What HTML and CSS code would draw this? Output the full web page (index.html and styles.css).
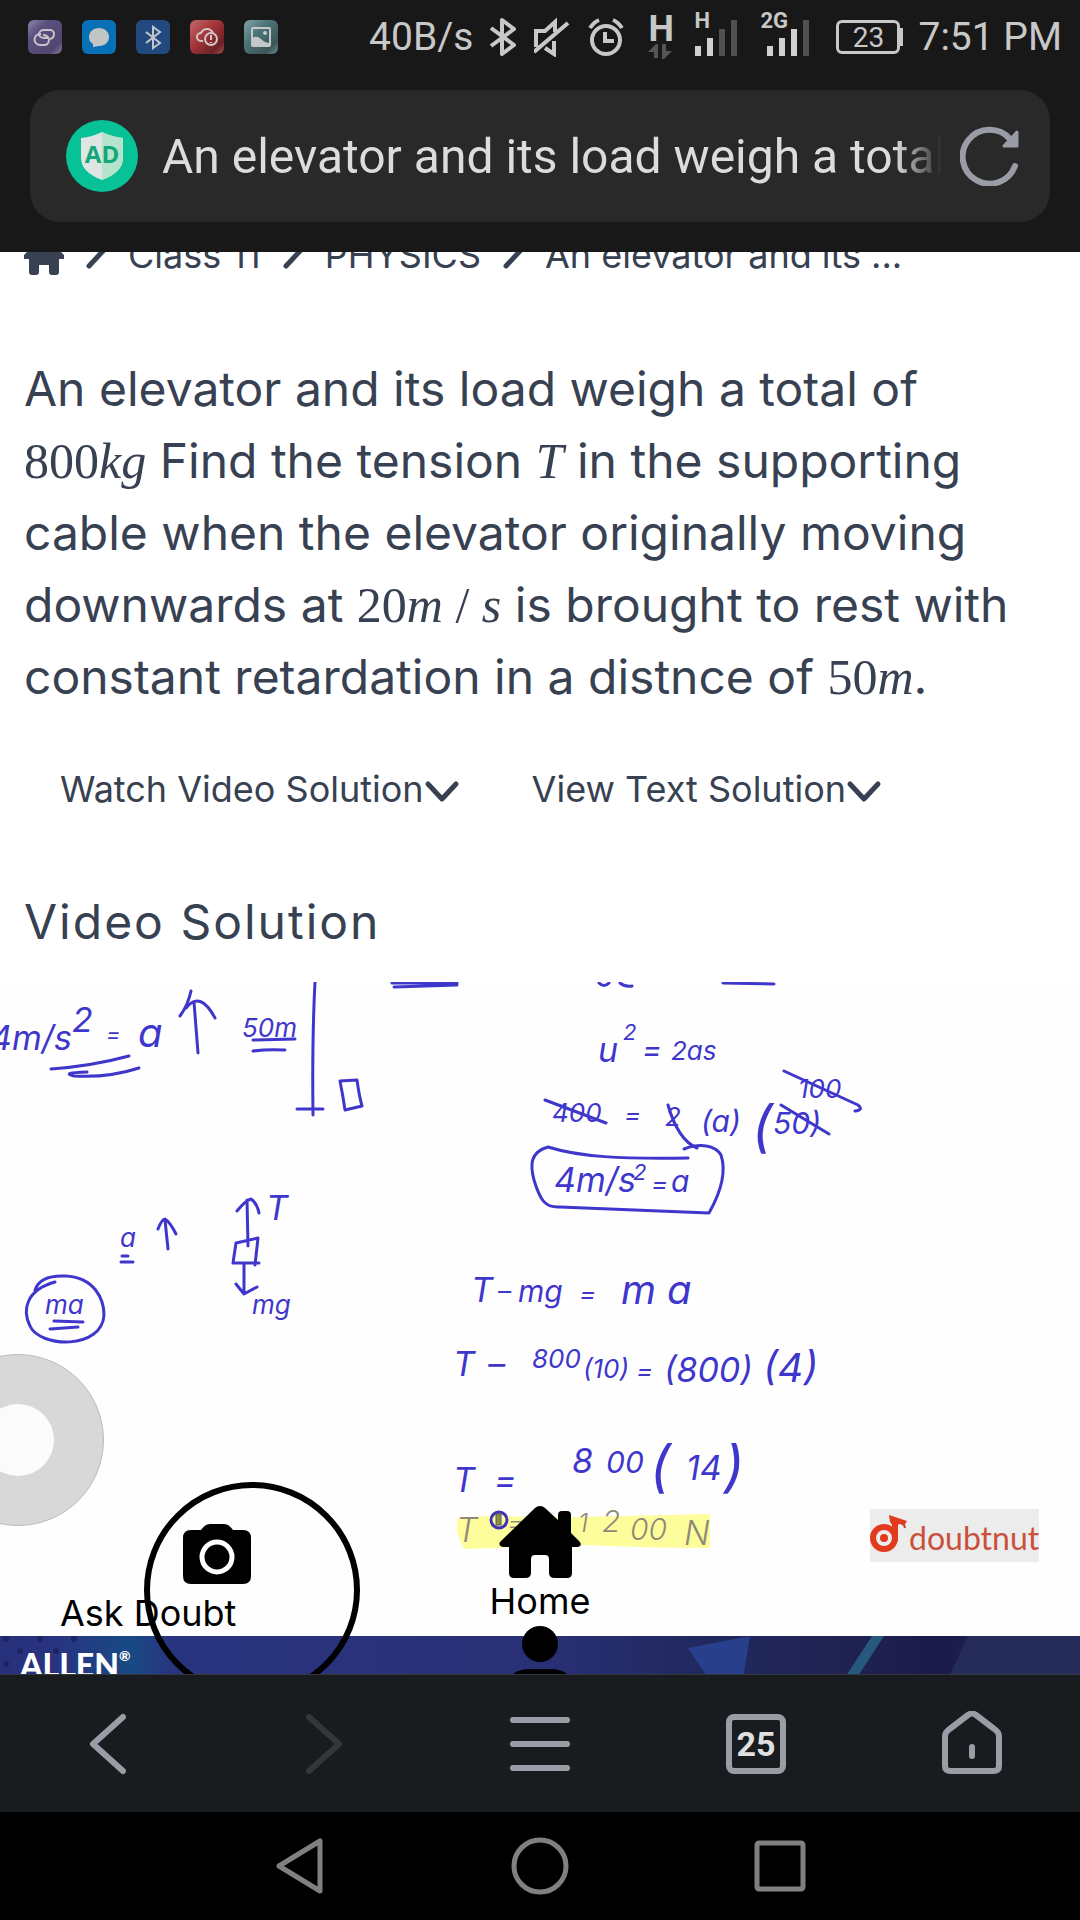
FILE: index.html
```html
<!DOCTYPE html>
<html lang="en">
<head>
<meta charset="utf-8">
<meta name="viewport" content="width=device-width, initial-scale=1">
<title>An elevator and its load weigh a total of 800kg</title>
<link rel="stylesheet" href="styles.css">
</head>
<body>
<header class="chrome">
  <div class="status">
    <div class="notices">
      <svg class="notice" viewBox="0 0 34 34"><defs><linearGradient id="g1" x2="1" y2="1"><stop offset="0" stop-color="#8f86a8"/><stop offset=".3" stop-color="#5c5080"/><stop offset=".8" stop-color="#51466f"/><stop offset="1" stop-color="#8a80a5"/></linearGradient></defs><rect width="34" height="34" rx="6" fill="url(#g1)"/><g fill="none" stroke="#c4c4c8" stroke-width="2"><path d="M21 18h-5a5 4 0 0 1 0-8h6a4 4 0 0 1 4 4q0 4-4 5"/><path d="M13 14h-1a5 5 0 0 0 0 11h5a5 5 0 0 0 3-8q-2-2-5-2"/></g></svg>
      <svg class="notice" viewBox="0 0 34 34"><rect width="34" height="34" rx="6" fill="#0870b6"/><path d="M17 8c6 0 10 4 10 9s-4 9-10 9l-6 1v-3c-3-2-4-4-4-7 0-5 4-9 10-9z" fill="#c2c4c6"/></svg>
      <svg class="notice" viewBox="0 0 34 34"><rect width="34" height="34" rx="6" fill="#224a80"/><path d="M10 12l14 11-7 5V7l7 5-14 11" fill="none" stroke="#c4c8cc" stroke-width="2"/></svg>
      <svg class="notice" viewBox="0 0 34 34"><defs><linearGradient id="g2" x2="1" y2="1"><stop offset="0" stop-color="#c26a6c"/><stop offset=".4" stop-color="#a8383b"/><stop offset=".8" stop-color="#6d2225"/><stop offset="1" stop-color="#a85053"/></linearGradient></defs><rect width="34" height="34" rx="6" fill="url(#g2)"/><g fill="none" stroke="#d4c4c4" stroke-width="2"><path d="M13 21h-2a4 4 0 0 1 0-8q2-4 6-4t6 4"/><circle cx="21" cy="19" r="6"/><path d="M21 15v5m0 2v1"/></g></svg>
      <svg class="notice" viewBox="0 0 34 34"><defs><linearGradient id="g3" x2="1" y2="1"><stop offset="0" stop-color="#83a3a6"/><stop offset=".4" stop-color="#4a7377"/><stop offset=".8" stop-color="#3c5457"/><stop offset="1" stop-color="#6f9295"/></linearGradient></defs><rect width="34" height="34" rx="6" fill="url(#g3)"/><rect x="8" y="8" width="18" height="18" rx="1" fill="none" stroke="#c4c8c8" stroke-width="2"/><path d="M8 18q5-3 9 1t9 4v3H8z" fill="#c4c8c8"/><circle cx="21" cy="13" r="2" fill="#c4c8c8"/></svg>
    </div>
    <span class="rate">40B/s</span>
    <svg class="s-bt" viewBox="0 0 27 40"><path d="M2 11l23 17-12 9V3l12 9L2 29" fill="none" stroke="#c8c8c8" stroke-width="4" stroke-linejoin="round"/></svg>
    <svg class="s-mute" viewBox="0 0 36 40"><path d="M2 30V14h9l10-9v10M11 31l9 6V24M0 35L34 6" fill="none" stroke="#c8c8c8" stroke-width="4" /></svg>
    <svg class="s-alarm" viewBox="0 0 36 40"><circle cx="18" cy="23" r="14" fill="none" stroke="#c8c8c8" stroke-width="4"/><path d="M17 15v9h9M2 11q4-6 9-8M34 11q-4-6-9-8" fill="none" stroke="#c8c8c8" stroke-width="4"/></svg>
    <div class="data"><b>H</b><svg viewBox="0 0 24 16"><path d="M0 9L8 1h2v14H6V9zM24 8l-8 8h-2V1h4v7z" fill="#555"/></svg></div>
    <div class="signal"><b>H</b><svg viewBox="0 0 44 38"><path d="M1 28h6v10H1zM13 20h6v18h-6z" fill="#d0d0d0"/><path d="M25 11h6v27h-6zM37 2h6v36h-6z" fill="#505050"/></svg></div>
    <div class="signal two"><b>2G</b><svg viewBox="0 0 44 38"><path d="M1 28h6v10H1zM13 20h6v18h-6zM25 11h6v27h-6z" fill="#d0d0d0"/><path d="M37 2h6v36h-6z" fill="#505050"/></svg></div>
    <div class="battery">23</div>
    <span class="clock">7:51 PM</span>
  </div>
  <div class="address">
    <svg class="shield" viewBox="0 0 72 72"><circle cx="36" cy="36" r="36" fill="#06c296"/><path d="M36 12q10 5 21 6v20q0 14-21 22-21-8-21-22V18q11-1 21-6z" fill="#dfe5e2"/><path d="M36 12q10 5 21 6v20q0 14-21 22z" fill="#b5e3cd"/><text x="36" y="43" text-anchor="middle" class="shield-text">AD</text></svg>
    <span class="page-title">An elevator and its load weigh a total of</span>
    <button class="plain reload" aria-label="Reload"><svg viewBox="0 0 60 60"><path d="M55 40A27 27 0 1 1 50 13" fill="none" stroke="#9b9da6" stroke-width="6" stroke-linecap="round"/><path d="M57 6v14H44z" fill="#9b9da6" stroke="#9b9da6" stroke-width="3" stroke-linejoin="round"/></svg></button>
  </div>
</header>

<main class="view">
  <article class="page">
    <nav class="crumbs" aria-label="Breadcrumb">
      <a href="#" aria-label="Home"><svg class="crumb-home" viewBox="0 0 40 40"><path d="M20 0l20 20v4h-5v13q0 3-3 3h-4q-3 0-3-3v-7H15v7q0 3-3 3H8q-3 0-3-3V24H0v-4z" fill="#374151"/></svg></a>
      <svg class="sep" viewBox="0 0 20 36"><path d="M3 3l14 15L3 33" /></svg>
      <a href="#">Class 11</a>
      <svg class="sep" viewBox="0 0 20 36"><path d="M3 3l14 15L3 33" /></svg>
      <a href="#">PHYSICS</a>
      <svg class="sep" viewBox="0 0 20 36"><path d="M3 3l14 15L3 33" /></svg>
      <span>An elevator and its ...</span>
    </nav>
    <h1 class="question">An elevator and its load weigh a total of <span class="math">800<i>kg</i></span> Find the tension <i class="math">T</i> in the supporting cable when the elevator originally moving downwards at <span class="math">20<i>m</i> / <i>s</i></span> is brought to rest with constant retardation in a distnce of <span class="math">50<i>m</i></span>.</h1>
    <div class="actions">
      <button class="plain action">Watch Video Solution<svg class="chev" viewBox="0 0 36 24"><path d="M4 4l14 15L32 4"/></svg></button>
      <button class="plain action">View Text Solution<svg class="chev" viewBox="0 0 36 24"><path d="M4 4l14 15L32 4"/></svg></button>
    </div>
    <h2 class="section">Video Solution</h2>

    <svg class="video" viewBox="0 982 1080 654" role="img" aria-label="Worked solution">
      <rect y="982" width="1080" height="654" fill="#fefefe"/>
      <path d="M458 1518q40-4 80 0l172-4v34q-60 0-128-3l-118 4q-10-18-6-31z" fill="#fdfd9c"/>
      <g class="ink-line">
        <path d="M51 1069Q92 1066 129 1056M87 1072Q60 1073 74 1076 108 1078 139 1068"/>
        <path d="M194 1002L198 1053M180 1016Q188 1005 191 991M186 1008Q200 990 215 1018"/>
        <path d="M253 1040L295 1039M253 1051Q268 1049 285 1050"/>
        <path d="M315 982Q312 1040 313 1115M297 1109H323M340 1081L357 1080Q359 1095 362 1106L345 1110Q343 1096 340 1081"/>
        <path d="M392 983H457M394 987L457 985M599 983q5 5 10 0M620 983q5 4 12 3M723 983L774 984"/>
        <path d="M248 1246L247 1200M237 1211Q246 1200 251 1199 257 1203 259 1213M236 1243L258 1238 255 1265M236 1243L233 1263H259M244 1263V1293M236 1284L244 1294 257 1287"/>
        <path d="M168 1249L165 1220M158 1229Q162 1219 165 1219 170 1222 176 1234M122 1256H128M121 1262H133"/>
        <path d="M35 1290Q40 1275 65 1276C95 1277 104 1300 104 1315 102 1350 40 1348 30 1326 22 1310 26 1290 55 1282M54 1321L83 1322M50 1329L78 1327"/>
        <path d="M545 1100L606 1123M668 1105Q678 1140 697 1148M781 1105L829 1134M784 1071L858 1105Q864 1110 855 1111"/>
        <path d="M688 1158C620 1159 580 1157 548 1147 530 1152 530 1165 534 1180 540 1200 545 1208 560 1207L709 1213C722 1190 726 1170 721 1155 715 1145 700 1143 684 1149"/>
      </g>
      <g class="ink">
        <text x="-10" y="1050" class="t34">4m/s</text><text x="72" y="1032" class="t34">2</text><text x="106" y="1042" class="t22">=</text><text x="138" y="1047" class="t40">a</text>
        <text x="242" y="1037" class="t26">50m</text>
        <text x="266" y="1220" class="t34">T</text><text x="252" y="1314" class="t26">mg</text><text x="120" y="1247" class="t26">a</text><text x="45" y="1314" class="t26">ma</text>
        <text x="598" y="1062" class="t34">u</text><text x="623" y="1040" class="t22">2</text><text x="642" y="1060" class="t30">=</text><text x="671" y="1060" class="t26">2as</text>
        <text x="552" y="1122" class="t26">400</text><text x="624" y="1124" class="t26">=</text><text x="665" y="1126" class="t26">2</text><text x="701" y="1132" class="t30">(a)</text><text x="752" y="1146" class="t56">(</text><text x="773" y="1134" class="t30">50)</text><text x="798" y="1098" class="t26">100</text>
        <text x="554" y="1192" class="t34">4m/s</text><text x="633" y="1180" class="t22">2</text><text x="651" y="1193" class="t26">=</text><text x="671" y="1192" class="t30">a</text>
        <text x="471" y="1302" class="t34">T</text><text x="498" y="1300" class="t26">–</text><text x="518" y="1302" class="t30">mg</text><text x="579" y="1303" class="t26">=</text><text x="621" y="1304" class="t40">m</text><text x="667" y="1304" class="t40">a</text>
        <text x="453" y="1376" class="t34">T</text><text x="488" y="1376" class="t34">–</text><text x="532" y="1368" class="t26">800</text><text x="583" y="1378" class="t26">(10)</text><text x="636" y="1380" class="t26">=</text><text x="664" y="1382" class="t34">(800)</text><text x="763" y="1382" class="t40">(4)</text>
        <text x="453" y="1492" class="t34">T</text><text x="494" y="1492" class="t34">=</text><text x="572" y="1473" class="t34">8</text><text x="606" y="1473" class="t30">00</text><text x="650" y="1486" class="t56">(</text><text x="686" y="1480" class="t34">14</text><text x="724" y="1486" class="t56">)</text>
      </g>
      <g class="pencil">
        <text x="456" y="1542" class="t34">T</text><text x="507" y="1532" class="t26">=</text><text x="578" y="1532" class="t26">1</text><text x="602" y="1532" class="t30">2</text><text x="630" y="1540" class="t30">00</text><text x="684" y="1545" class="t34">N</text>
      </g>
      <circle cx="499" cy="1520" r="8" fill="#fdfd9c" stroke="#3f34b8" stroke-width="3"/><rect x="496" y="1514" width="5" height="11" fill="#8c9048" stroke="#555" stroke-width="1"/>
      <rect x="870" y="1509" width="169" height="53" fill="#ececec"/>
      <circle cx="884" cy="1538" r="11" fill="none" stroke="#e23a1c" stroke-width="6"/><circle cx="884" cy="1538" r="4" fill="#e23a1c"/><path d="M895 1541V1522" stroke="#e23a1c" stroke-width="6"/><path d="M889 1515l18 6-3 5-4-2-7 2-3-4z" fill="#e23a1c"/><path d="M903 1521l2 7" stroke="#c2452e" stroke-width="2"/>
      <text x="909" y="1550" class="brand">doubtnut</text>
    </svg>

    <div class="banner">
      <svg class="banner-art" viewBox="0 0 1080 60" preserveAspectRatio="none"><defs><linearGradient id="sky"><stop offset="0" stop-color="#27307a"/><stop offset=".05" stop-color="#293380"/><stop offset=".12" stop-color="#184a85"/><stop offset=".16" stop-color="#29347f"/><stop offset=".5" stop-color="#293076"/><stop offset=".62" stop-color="#222a63"/><stop offset=".78" stop-color="#202352"/><stop offset=".87" stop-color="#1a1a4b"/><stop offset="1" stop-color="#26305f"/></linearGradient></defs><rect width="1080" height="60" fill="url(#sky)"/><path d="M688 12L750 0l-10 60h-20z" fill="#28408c"/><path d="M872 0h12L845 60h-12z" fill="#27597e"/><path d="M968 0h112v60H940z" fill="#252c5a"/><g fill="#1d2462"><circle cx="6" cy="3" r="3"/><circle cx="40" cy="3" r="3"/><circle cx="74" cy="3" r="3"/><circle cx="20" cy="15" r="3"/><circle cx="56" cy="15" r="3"/><circle cx="6" cy="28" r="3"/></g></svg>
      <span class="allen">ALLEN<small>®</small></span>
    </div>
  </article>

  <button class="plain bubble" aria-label="Assistive touch"></button>
  <div class="dock">
    <span class="ring"></span>
    <a href="#" class="ask"><svg viewBox="0 0 68 60"><path d="M18 6q4-6 9-6h14q5 0 9 6h10q8 0 8 8v38q0 8-8 8H8q-8 0-8-8V14q0-8 8-8z"/><circle cx="34" cy="33" r="15" fill="none" stroke="#fff" stroke-width="5"/></svg>Ask Doubt</a>
    <a href="#" class="home"><svg viewBox="0 0 82 72"><path d="M41 0q3 0 5 2l13 12V9q0-4 4-4h5q4 0 4 4v18l8 8q3 3 1 5-1 1-3 1h-5v26q0 5-5 5H56q-6 0-6-5V53q0-4-4-4H36q-4 0-4 4v14q0 5-6 5H15q-5 0-5-5V41H4q-5-1-3-5L36 2q2-2 5-2z"/></svg>Home</a>
    <a href="#" class="profile" aria-label="Profile"><svg viewBox="0 0 72 72"><circle cx="36" cy="18" r="18"/><path d="M0 72q0-29 26-29h20q26 0 26 29z"/></svg></a>
  </div>
</main>

<nav class="toolbar" aria-label="Browser">
  <button class="plain" aria-label="Back"><svg viewBox="0 0 60 66"><path d="M45 6L15 33l30 27"/></svg></button>
  <button class="plain dim" aria-label="Forward"><svg viewBox="0 0 60 66"><path d="M15 6l30 27-30 27"/></svg></button>
  <button class="plain" aria-label="Menu"><svg viewBox="0 0 60 66"><path d="M3 9h54M3 33h54M3 57h54"/></svg></button>
  <button class="plain" aria-label="Tabs"><span class="tabs">25</span></button>
  <button class="plain" aria-label="Home page"><svg viewBox="0 0 60 66"><path d="M9 17L26 4q4-3 8 0l17 13q6 4 6 8v30q0 5-6 5H9q-6 0-6-5V25q0-4 6-8zM30 36v9"/></svg></button>
</nav>
<nav class="system" aria-label="System">
  <button class="plain" aria-label="Back"><svg viewBox="0 0 60 60"><path d="M50 5v50L9 30z"/></svg></button>
  <button class="plain" aria-label="Home"><svg viewBox="0 0 60 60"><circle cx="30" cy="30" r="26"/></svg></button>
  <button class="plain" aria-label="Recent"><svg viewBox="0 0 60 60"><rect x="7" y="7" width="46" height="46" rx="2"/></svg></button>
</nav>
</body>
</html>
```
FILE: styles.css
```css
* { box-sizing: border-box; }
body {
  margin: 0;
  height: 100vh;
  display: flex;
  flex-direction: column;
  overflow: hidden;
  background: #fff;
  color: #374151;
  font-family: Inter, "Noto Sans", sans-serif;
}
svg { display: block; }
a { color: inherit; text-decoration: none; }
.plain { border: 0; padding: 0; background: none; color: inherit; font: inherit; display: flex; align-items: center; justify-content: center; }

.chrome { flex: none; background: #181818; padding-bottom: 30px; font-family: Roboto, sans-serif; }
.status { display: flex; align-items: center; height: 74px; margin-bottom: 16px; padding: 0 18px 0 28px; color: #c8c8c8; font-size: 39px; }
.notices { display: flex; gap: 20px; margin-right: auto; }
.notice { width: 34px; height: 34px; }
.s-bt { width: 27px; height: 40px; margin: 0 18px 0 16px; }
.s-mute { width: 36px; height: 40px; margin-right: 18px; }
.s-alarm { width: 36px; height: 40px; margin-right: 24px; }
.data { width: 24px; margin-right: 22px; font-size: 36px; line-height: 28px; text-align: center; }
.data svg { width: 24px; height: 16px; }
.signal { position: relative; width: 44px; margin-right: 28px; }
.signal svg { width: 44px; height: 38px; }
.signal b { position: absolute; left: 0; top: -8px; font-size: 22px; line-height: 22px; }
.two b { left: -6px; }
.two { margin-right: 26px; }
.battery { position: relative; width: 64px; height: 34px; border: 3px solid #c8c8c8; border-radius: 6px; margin-right: 18px; font-size: 28px; line-height: 29px; text-align: center; }
.battery::after { content: ""; position: absolute; right: -6px; top: 5px; width: 4px; height: 18px; background: #c8c8c8; }
.address { display: flex; align-items: center; height: 132px; margin: 0 30px; padding: 0 30px 0 36px; border-radius: 30px; background: #292929; }
.shield { flex: none; width: 72px; height: 72px; margin-right: 24px; }
.shield-text { font: bold 24px "Open Sans", sans-serif; fill: #12a878; }
.page-title { flex: 1; min-width: 0; padding-top: 2px; overflow: hidden; white-space: nowrap; color: #dcdcdc; font-size: 48px; line-height: 72px; -webkit-mask-image: linear-gradient(90deg, #000 94%, transparent); mask-image: linear-gradient(90deg, #000 94%, transparent); }
.reload { flex: none; margin-left: 18px; }
.reload svg { width: 60px; height: 60px; }

.view { position: relative; flex: 1; min-height: 0; overflow: hidden; }
.page { margin-top: -24px; }
.crumbs { display: flex; align-items: center; gap: 22px; height: 54px; padding: 0 24px; font-size: 36px; line-height: 54px; }
.crumb-home { width: 40px; height: 40px; }
.sep { width: 20px; height: 36px; margin-bottom: 8px; fill: none; stroke: #374151; stroke-width: 5; stroke-linecap: round; }
.question { margin: 71px 0 0; padding: 0 48px 0 24px; font-size: 48px; line-height: 72px; font-weight: 400; }
.math { font-family: "Liberation Serif", serif; font-size: 50px; line-height: 48px; }
.actions { display: flex; gap: 72px; margin: 49px 60px 0; }
.action { font-size: 36px; line-height: 54px; white-space: nowrap; }
.chev { width: 36px; height: 24px; margin-top: 6px; fill: none; stroke: #374151; stroke-width: 5; stroke-linecap: round; stroke-linejoin: round; }
.section { margin: 70px 24px 0; font-size: 48px; line-height: 72px; font-weight: 400; letter-spacing: 2px; }

.video { width: 100%; margin-top: 24px; }
.ink-line { fill: none; stroke: #3f36cc; stroke-width: 3; stroke-linecap: round; stroke-linejoin: round; }
.ink, .pencil { fill: #3f36cc; font-family: Inter, sans-serif; font-weight: 400; font-style: italic; }
.pencil { fill: #8f8a78; font-weight: 300; }
.t22 { font-size: 22px; }
.t26 { font-size: 26px; }
.t30 { font-size: 30px; }
.t34 { font-size: 34px; }
.t40 { font-size: 40px; }
.t56 { font-size: 56px; }
.brand { font: 32px Lato, sans-serif; fill: #c9513c; }

.banner { position: relative; height: 60px; }
.banner-art { width: 100%; height: 60px; }
.allen { position: absolute; left: 20px; top: 11px; color: #fff; font: 900 32px/36px Lato, sans-serif; }
.allen small { font-size: 14px; vertical-align: top; line-height: 18px; }

.bubble { position: absolute; left: -68px; bottom: 148px; width: 172px; height: 172px; border-radius: 50%; background: #d8d8d8; border: 1px solid #bdbdbd; }
.bubble::after { content: ""; width: 72px; height: 72px; border-radius: 50%; background: #fbfbfb; }
.dock { position: absolute; left: 0; right: 0; bottom: 0; height: 192px; color: #000; font-size: 36px; line-height: 36px; }
.dock svg { fill: #000; }
.ring { position: absolute; left: 144px; top: 0; width: 216px; height: 216px; border: 6px solid #000; border-radius: 50%; }
.ask { position: absolute; left: 60px; top: 42px; display: flex; flex-direction: column; gap: 11px; }
.ask svg { width: 68px; height: 60px; margin-left: 123px; }
.home { position: absolute; left: 0; right: 0; top: 24px; display: flex; flex-direction: column; align-items: center; gap: 5px; }
.home svg { width: 82px; height: 72px; }
.profile { position: absolute; left: 0; right: 0; top: 144px; display: flex; justify-content: center; }
.profile svg { width: 72px; height: 72px; }

.toolbar { position: relative; flex: none; display: grid; grid-template-columns: repeat(5, 1fr); height: 138px; background: #181c1f; border-top: 1px solid #33363a; }
.toolbar svg { width: 60px; height: 66px; fill: none; stroke: #9b9da6; stroke-width: 6; stroke-linecap: round; stroke-linejoin: round; }
.toolbar .dim svg { stroke: #33363a; }
.tabs { width: 60px; height: 60px; border: 6px solid #9b9da6; border-radius: 8px; color: #e0e0e0; font: bold 34px/48px Roboto, sans-serif; text-align: center; }
.system { position: relative; flex: none; display: grid; grid-template-columns: repeat(3, 240px); justify-content: center; height: 108px; background: #000; }
.system svg { width: 60px; height: 60px; fill: none; stroke: #808080; stroke-width: 5; stroke-linejoin: round; }
```
